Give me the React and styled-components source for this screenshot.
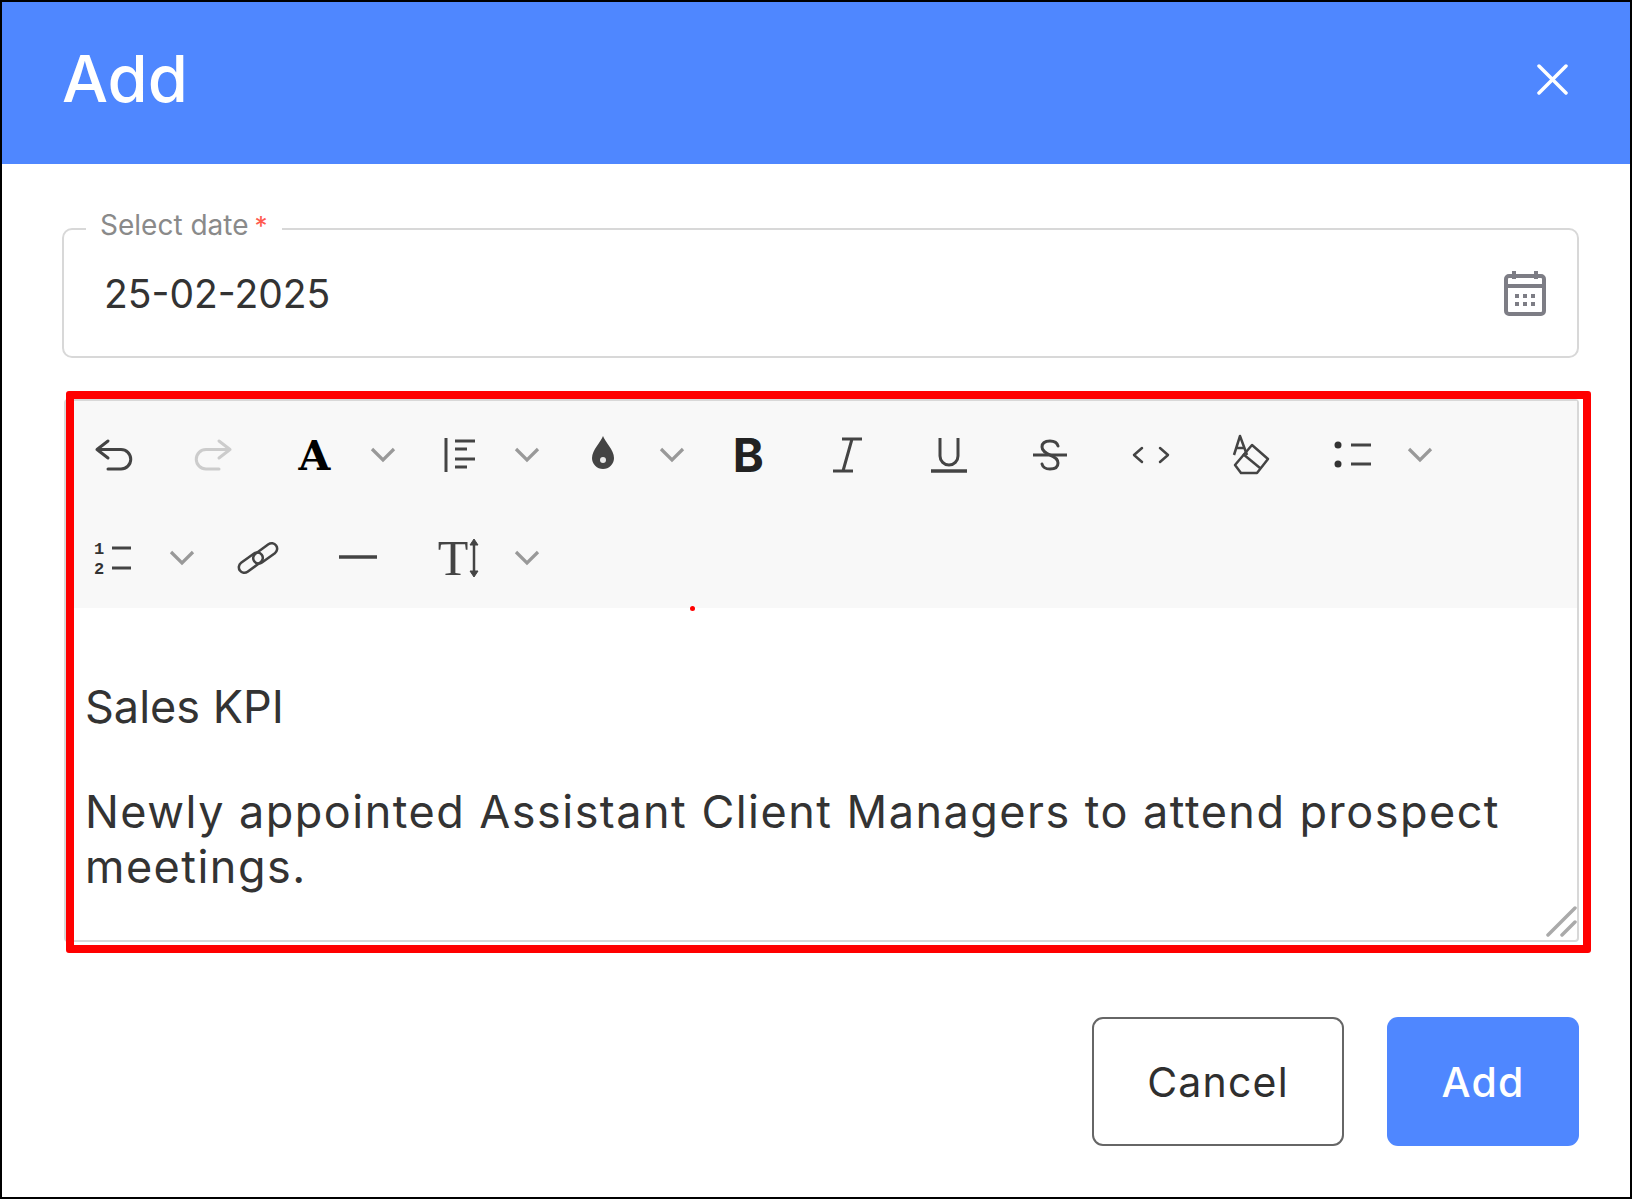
import styled, { createGlobalStyle } from "styled-components";

const GlobalStyle = createGlobalStyle`
  html, body {
    margin: 0;
    padding: 0;
    background: #fff;
  }
  body {
    font-family: "Inter", "Liberation Sans", sans-serif;
    color: #333;
  }
`;

const Modal = styled.div`
  width: 1632px;
  height: 1199px;
  box-sizing: border-box;
  border: 2px solid #000;
  background: #fff;
  overflow: hidden;
`;

const Header = styled.header`
  height: 162px;
  background: #4f87ff;
  display: flex;
  align-items: center;
  justify-content: space-between;
  padding: 0 62px 8px 60px;
  box-sizing: border-box;
`;

const Title = styled.h1`
  margin: 0 0 2px;
  font-size: 65px;
  font-weight: 500;
  color: #fff;
`;

const CloseButton = styled.button`
  border: 0;
  padding: 0;
  background: none;
  display: flex;
`;

const Body = styled.div`
  padding: 54px 51px 0 60px;
`;

const DateField = styled.fieldset`
  margin: 0;
  padding: 0 31px 0 40px;
  height: 140px;
  box-sizing: border-box;
  border: 2px solid #d8d8d8;
  border-radius: 10px;
`;

const DateLegend = styled.legend`
  margin-left: -18px;
  padding: 0 14px;
  font-size: 28px;
  line-height: 14px;
  color: #8a8a8a;
  height: 22px;
`;

const Star = styled.span`
  color: #ff5a4f;
  font-size: 26px;
  margin-left: 6px;
`;

const DateRow = styled.div`
  height: 116px;
  margin-top: -5px;
  display: flex;
  align-items: center;
  justify-content: space-between;
`;

const DateValue = styled.span`
  font-size: 39px;
  color: #333;
`;

const Editor = styled.div`
  position: relative;
  margin: 41px 0 0 2px;
  height: 543px;
  border: 2px solid #d8d8d8;
  border-radius: 4px;
  box-sizing: border-box;
`;

const Toolbar = styled.div`
  height: 207px;
  box-sizing: border-box;
  background: #f8f8f8;
  padding-top: 2px;
`;

const ToolList = styled.div`
  margin-left: -3px;
  display: flex;
  flex-wrap: wrap;
  align-content: flex-start;
`;

const ToolGroup = styled.div`
  display: flex;
  flex: none;
`;

const ToolButton = styled.span`
  width: 100.6px;
  height: 103px;
  display: flex;
  align-items: center;
  justify-content: center;
  flex: none;
`;

const Caret = styled.span`
  width: 36px;
  margin-right: 8px;
  height: 103px;
  display: flex;
  align-items: center;
  justify-content: center;
  flex: none;
`;

const Glyph = styled.span`
  font-family: ${(p) => p.$font};
  font-size: ${(p) => p.$size}px;
  font-weight: ${(p) => p.$weight || 400};
  color: ${(p) => p.$color};
  line-height: 1;
  padding-top: ${(p) => p.$drop || 0}px;
`;

const Content = styled.div`
  padding: 71px 20px 0 19px;
  font-size: 45px;
  line-height: 55px;
  color: #333;
`;

const Paragraph = styled.p`
  margin: 0 0 50px;
  letter-spacing: ${(p) => p.$tracking || 0}px;
`;

const Grip = styled.svg`
  position: absolute;
  right: 0;
  bottom: 3px;
`;

const Highlight = styled.div`
  position: absolute;
  top: -10px;
  left: 0;
  right: -14px;
  bottom: -13px;
  border: 8.5px solid #ff0000;
  border-radius: 3px;
  pointer-events: none;
`;

const RedDot = styled.span`
  position: absolute;
  left: 624px;
  top: 205px;
  width: 5px;
  height: 5px;
  border-radius: 50%;
  background: #ff0000;
`;

const Footer = styled.div`
  display: flex;
  justify-content: flex-end;
  gap: 43px;
  margin-top: 75px;
`;

const Button = styled.button`
  height: 129px;
  width: ${(p) => p.$width}px;
  box-sizing: border-box;
  border-radius: 11px;
  font-family: inherit;
  font-size: 41px;
  letter-spacing: 1.2px;
  font-weight: ${(p) => (p.$primary ? 500 : 400)};
  color: ${(p) => (p.$primary ? "#fff" : "#2f2f2f")};
  background: ${(p) => (p.$primary ? "#4f87ff" : "#fff")};
  border: ${(p) => (p.$primary ? "0" : "2px solid #666")};
`;

const Icon = ({ children }) => (
  <svg width="44" height="44" viewBox="0 0 44 44" fill="none" stroke="#444" strokeWidth="3" strokeLinecap="round" strokeLinejoin="round">
    {children}
  </svg>
);

const Chevron = () => (
  <Caret>
    <svg width="26" height="16" viewBox="0 0 26 16" fill="none" stroke="#999" strokeWidth="3.2">
      <path d="M2 2l11 11L24 2" />
    </svg>
  </Caret>
);

const Undo = () => (
  <Icon>
    <path d="M17 8L6 16.5 17 25M6 16.5h24a9.75 9.75 0 0 1 0 19.5H17" />
  </Icon>
);

const Redo = () => (
  <Icon>
    <g stroke="#ccc" transform="matrix(-1 0 0 1 44 0)">
      <path d="M17 8L6 16.5 17 25M6 16.5h24a9.75 9.75 0 0 1 0 19.5H17" />
    </g>
  </Icon>
);

const FontName = () => <Glyph $font='"DejaVu Serif", serif' $size={41} $weight={700} $color="#000" $drop={4}>A</Glyph>;

const Align = () => (
  <Icon>
    <path d="M9 5v34" strokeLinecap="butt" />
    <path d="M18 8h20M18 16h12M18 26h20M18 34h12" strokeLinecap="butt" />
  </Icon>
);

const Drop = () => (
  <svg width="44" height="44" viewBox="0 0 44 44">
    <path d="M21 3c-2 6-11 14-11 22a11 11 0 0 0 22 0c0-8-9-16-11-22z" fill="#444" />
    <circle cx="21" cy="27" r="3" fill="#e8e8e8" />
  </svg>
);

const Bold = () => <Glyph $font="Inter, sans-serif" $size={47} $weight={700} $color="#222">B</Glyph>;

const Italic = () => (
  <Icon>
    <path d="M15 6h20M6 38h20M25 6l-9 32" strokeLinecap="butt" />
  </Icon>
);

const Underline = () => (
  <Icon>
    <path d="M13 5v18a9 9 0 0 0 18 0V5" strokeLinecap="butt" />
    <path d="M4 38h36" strokeLinecap="butt" strokeWidth="3.5" />
  </Icon>
);

const Strike = () => (
  <Icon>
    <path d="M30 13c-1-4-4-5-8-5-5 0-8 2-8 6 0 4 4 6 8 8 5 2 8 4 8 8 0 4-3 6-8 6-4 0-7-1-8-5" />
    <path d="M5 22h34" strokeLinecap="butt" />
  </Icon>
);

const Code = () => (
  <Icon>
    <path d="M13 15l-8 7 8 7M31 15l8 7-8 7" strokeWidth="2.5" />
  </Icon>
);

const Eraser = () => (
  <Icon>
    <g strokeWidth="2.5" strokeLinecap="butt">
      <path d="M5 22L11 3l7 19M7.5 15h8" />
      <path d="M23 12l16 14-11 14H12l-6-8z" />
      <path d="M14 21l17 14" />
    </g>
  </Icon>
);

const BulletList = () => (
  <Icon>
    <circle cx="8" cy="12" r="3.5" fill="#333" stroke="none" />
    <circle cx="8" cy="31" r="3.5" fill="#333" stroke="none" />
    <path d="M21 12h20M21 31h20" strokeLinecap="butt" />
  </Icon>
);

const NumberList = () => (
  <Icon>
    <text x="8" y="18" textAnchor="middle" fontFamily="Liberation Mono" fontWeight="700" fontSize="17" fill="#333" stroke="none">1</text>
    <text x="8" y="38" textAnchor="middle" fontFamily="Liberation Mono" fontWeight="700" fontSize="17" fill="#333" stroke="none">2</text>
    <path d="M21 12h19M21 32h19" strokeLinecap="butt" />
  </Icon>
);

const LinkIcon = () => (
  <Icon>
    <g transform="rotate(-36 22 22)" strokeWidth="2.5">
      <rect x="0" y="16" width="27" height="11" rx="5.5" />
      <rect x="17" y="17" width="27" height="11" rx="5.5" />
    </g>
  </Icon>
);

const Rule = () => (
  <Icon>
    <path d="M3 21h38" strokeLinecap="butt" strokeWidth="3.5" />
  </Icon>
);

const FontSize = () => (
  <>
    <Glyph $font='"Liberation Serif", serif' $size={50} $color="#444">T</Glyph>
    <svg width="12" height="40" viewBox="0 0 12 40" fill="none" stroke="#444">
      <path d="M6 4v32" strokeWidth="2.5" />
      <path d="M2 7l4-6 4 6zM2 33l4 6 4-6z" fill="#444" strokeWidth="1" />
    </svg>
  </>
);

const CalendarIcon = () => (
  <svg width="42" height="46" viewBox="0 0 42 46" fill="none">
    <rect x="2" y="6" width="38" height="38" rx="3" stroke="#7d7d85" strokeWidth="4" />
    <path d="M2 14h38v4H2z" fill="#7d7d85" />
    <path d="M10 1v8M32 1v8" stroke="#7d7d85" strokeWidth="4" />
    <g fill="#7d7d85">
      {[11, 19, 27].map((x) =>
        [24, 32].map((y) => <rect key={`${x}-${y}`} x={x} y={y} width="4" height="4" />)
      )}
    </g>
  </svg>
);

const CloseIcon = () => (
  <svg width="31" height="31" viewBox="0 0 31 31" stroke="#fff" strokeWidth="3.5" strokeLinecap="round">
    <path d="M2 2l27 27M29 2L2 29" />
  </svg>
);

const tools = [
  [Undo, false],
  [Redo, false],
  [FontName, true],
  [Align, true],
  [Drop, true],
  [Bold, false],
  [Italic, false],
  [Underline, false],
  [Strike, false],
  [Code, false],
  [Eraser, false],
  [BulletList, true],
  [NumberList, true],
  [LinkIcon, false],
  [Rule, false],
  [FontSize, true],
];

const App = () => {
  return (
    <Modal>
      <GlobalStyle />
      <Header>
        <Title>Add</Title>
        <CloseButton aria-label="Close">
          <CloseIcon />
        </CloseButton>
      </Header>
      <Body>
        <DateField>
          <DateLegend>
            Select date<Star>*</Star>
          </DateLegend>
          <DateRow>
            <DateValue>25-02-2025</DateValue>
            <CalendarIcon />
          </DateRow>
        </DateField>
        <Editor>
          <Toolbar>
            <ToolList>
              {tools.map(([Tool, hasCaret], i) => (
                <ToolGroup key={i}>
                  <ToolButton>
                    <Tool />
                  </ToolButton>
                  {hasCaret && <Chevron />}
                </ToolGroup>
              ))}
            </ToolList>
          </Toolbar>
          <Content>
            <Paragraph>Sales KPI</Paragraph>
            <Paragraph $tracking={1.47}>Newly appointed Assistant Client Managers to attend prospect meetings.</Paragraph>
          </Content>
          <Grip width="32" height="32" viewBox="0 0 32 32" stroke="#aaa" strokeWidth="3.5" strokeLinecap="round">
            <path d="M3 30L30 3M17 30L30 17" />
          </Grip>
          <RedDot />
          <Highlight />
        </Editor>
        <Footer>
          <Button $width={252}>Cancel</Button>
          <Button $width={192} $primary>Add</Button>
        </Footer>
      </Body>
    </Modal>
  );
};

export default App;
